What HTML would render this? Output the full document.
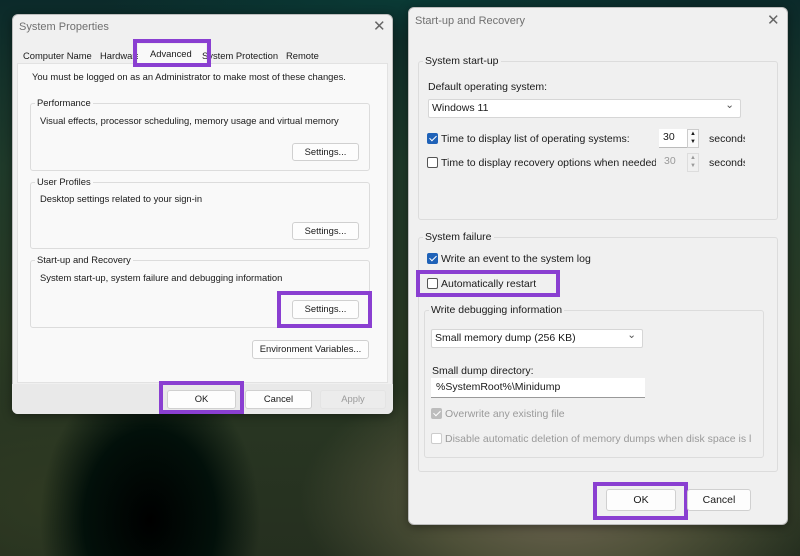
<!DOCTYPE html>
<html><head><meta charset="utf-8"><style>
*{box-sizing:border-box;margin:0;padding:0}
body{width:800px;height:556px;overflow:hidden;position:relative;font-family:"Liberation Sans",sans-serif;font-size:10.5px;color:#1a1a1a;
background:
radial-gradient(ellipse 110px 150px at 150px 520px,#000 0%,#02100a 60%,transparent 100%),
radial-gradient(ellipse 260px 140px at 560px 500px,#6e6552 0%,#4e5038 50%,transparent 100%),
radial-gradient(ellipse 200px 120px at 60px 500px,#2f3a22 0%,transparent 100%),
radial-gradient(ellipse 300px 40px at 400px 0px,#0a3a35 0%,transparent 100%),
linear-gradient(180deg,#0b2a2a 0%,#1f3a2a 30%,#2a3a24 60%,#252f1f 100%);}
.a{position:absolute;white-space:nowrap}
.L{font-size:9.4px}
.dlg{position:absolute;background:#f0f0f0;border:1px solid #bdbdbd;border-radius:6px;box-shadow:0 2px 10px rgba(0,0,0,.4)}
.title{color:#707070;font-size:11px}
.x{color:#666;font-size:15px}
.grp{position:absolute;border:1px solid #dcdcdc;border-radius:3px}
.gt{position:absolute;background:#f0f0f0;padding:0 2px;top:-7px;left:4px;font-size:10.5px}
.L .gt{font-size:9.4px}
.btn{position:absolute;background:#fdfdfd;border:1px solid #d0d0d0;border-radius:3px;text-align:center;line-height:16px}
.hl{position:absolute;border:4px solid #8a3fd1}
.cb{position:absolute;width:11px;height:11px;border:1px solid #555;border-radius:2px;background:#fff}
.cbc{background:#1f62b8;border-color:#1f62b8}
.cbc:after{content:"";position:absolute;left:3px;top:0px;width:3px;height:6px;border:solid #fff;border-width:0 1.5px 1.5px 0;transform:rotate(45deg)}
.sel{position:absolute;background:#fff;border:1px solid #d6d6d6;border-radius:2px;padding-left:3px;line-height:16px}
.sel:after{content:"⌄";position:absolute;right:6px;top:-3px;color:#555}
.gray{color:#9a9a9a}
.clip{overflow:hidden}
</style></head><body>

<!-- Left dialog -->
<div class="dlg" style="left:12px;top:14px;width:381px;height:400px"></div>
<div class="dlg" style="left:12px;top:14px;width:381px;height:400px;border:none;box-shadow:none;background:transparent">
  <div style="position:absolute;left:0;right:0;top:370px;bottom:0;background:#e9e9e9;border-radius:0 0 6px 6px"></div>
  <div style="position:absolute;left:5px;top:49px;width:371px;height:320px;background:#f9f9f9;border:1px solid #e2e2e2"></div>
</div>
<div class="L">
<div class="a title" style="left:19px;top:21px">System Properties</div>
<div class="a x" style="left:373px;top:17px">✕</div>
<div class="a" style="left:23px;top:50px">Computer Name</div>
<div class="a" style="left:100px;top:50px">Hardware</div>
<div class="a" style="left:138px;top:44px;width:68px;height:20px;background:#f9f9f9"></div>
<div class="a" style="left:150px;top:48px">Advanced</div>
<div class="a" style="left:202px;top:50px">System Protection</div>
<div class="a" style="left:286px;top:50px">Remote</div>
<div class="hl" style="left:133px;top:39px;width:78px;height:28px"></div>
<div class="a" style="left:32px;top:71px">You must be logged on as an Administrator to make most of these changes.</div>

<div class="grp" style="left:30px;top:103px;width:340px;height:68px"><div class="gt" style="background:#f9f9f9">Performance</div></div>
<div class="a" style="left:40px;top:115px">Visual effects, processor scheduling, memory usage and virtual memory</div>
<div class="btn" style="left:292px;top:143px;width:67px;height:18px">Settings...</div>

<div class="grp" style="left:30px;top:182px;width:340px;height:67px"><div class="gt" style="background:#f9f9f9">User Profiles</div></div>
<div class="a" style="left:40px;top:193px">Desktop settings related to your sign-in</div>
<div class="btn" style="left:292px;top:222px;width:67px;height:18px">Settings...</div>

<div class="grp" style="left:30px;top:260px;width:340px;height:68px"><div class="gt" style="background:#f9f9f9">Start-up and Recovery</div></div>
<div class="a" style="left:40px;top:272px">System start-up, system failure and debugging information</div>
<div class="btn" style="left:292px;top:300px;width:67px;height:19px">Settings...</div>
<div class="hl" style="left:277px;top:291px;width:95px;height:37px"></div>

<div class="btn" style="left:252px;top:340px;width:117px;height:19px">Environment Variables...</div>
<div class="btn" style="left:167px;top:390px;width:69px;height:19px">OK</div>
<div class="hl" style="left:159px;top:381px;width:85px;height:33px"></div>
<div class="btn" style="left:245px;top:390px;width:67px;height:19px">Cancel</div>
<div class="btn gray" style="left:320px;top:390px;width:66px;height:19px;background:#ececec;border-color:#e4e4e4">Apply</div>
</div>

<!-- Right dialog -->
<div class="dlg" style="left:408px;top:7px;width:380px;height:518px"></div>
<div class="a title" style="left:415px;top:15px">Start-up and Recovery</div>
<div class="a x" style="left:767px;top:11px">✕</div>

<div class="grp" style="left:418px;top:61px;width:360px;height:159px"><div class="gt">System start-up</div></div>
<div class="a" style="left:428px;top:81px">Default operating system:</div>
<div class="sel" style="left:428px;top:99px;width:313px;height:19px">Windows 11</div>
<div class="cb cbc" style="left:427px;top:133px"></div>
<div class="a" style="left:441px;top:133px">Time to display list of operating systems:</div>
<div class="a" style="left:659px;top:129px;width:40px;height:19px;background:#fff;border-bottom:1px solid #bbb;padding:2px 0 0 4px">30</div>
<div class="a" style="left:687px;top:129px;width:12px;height:19px;border:1px solid #ccc;background:#fafafa;font-size:6px;text-align:center;line-height:8px">▲<br>▼</div>
<div class="a clip" style="left:709px;top:133px;width:36px">seconds</div>
<div class="cb" style="left:427px;top:157px"></div>
<div class="a clip" style="left:441px;top:157px;width:215px">Time to display recovery options when needed</div>
<div class="a gray" style="left:661px;top:152px;padding:3px 0 0 3px">30</div>
<div class="a gray" style="left:687px;top:153px;width:12px;height:19px;border:1px solid #ddd;font-size:6px;text-align:center;line-height:8px">▲<br>▼</div>
<div class="a clip" style="left:709px;top:157px;width:36px">seconds</div>

<div class="grp" style="left:418px;top:237px;width:360px;height:235px"><div class="gt">System failure</div></div>
<div class="cb cbc" style="left:427px;top:253px"></div>
<div class="a" style="left:441px;top:253px">Write an event to the system log</div>
<div class="cb" style="left:427px;top:278px"></div>
<div class="a" style="left:441px;top:278px">Automatically restart</div>
<div class="hl" style="left:416px;top:270px;width:144px;height:27px"></div>

<div class="grp" style="left:424px;top:310px;width:340px;height:148px"><div class="gt">Write debugging information</div></div>
<div class="sel" style="left:431px;top:329px;width:212px;height:19px">Small memory dump (256 KB)</div>
<div class="a" style="left:432px;top:365px">Small dump directory:</div>
<div class="a" style="left:431px;top:378px;width:214px;height:20px;background:#fff;border-bottom:1px solid #999;padding:3px 0 0 5px">%SystemRoot%\Minidump</div>
<div class="cb cbc" style="left:431px;top:408px;background:#bdbdbd;border-color:#bdbdbd"></div>
<div class="a gray" style="left:445px;top:408px">Overwrite any existing file</div>
<div class="cb" style="left:431px;top:433px;border-color:#ccc"></div>
<div class="a gray" style="left:445px;top:433px">Disable automatic deletion of memory dumps when disk space is l</div>

<div class="btn" style="left:606px;top:489px;width:70px;height:22px;line-height:20px">OK</div>
<div class="hl" style="left:593px;top:482px;width:95px;height:38px"></div>
<div class="btn" style="left:687px;top:489px;width:64px;height:22px;line-height:20px">Cancel</div>
</body></html>
